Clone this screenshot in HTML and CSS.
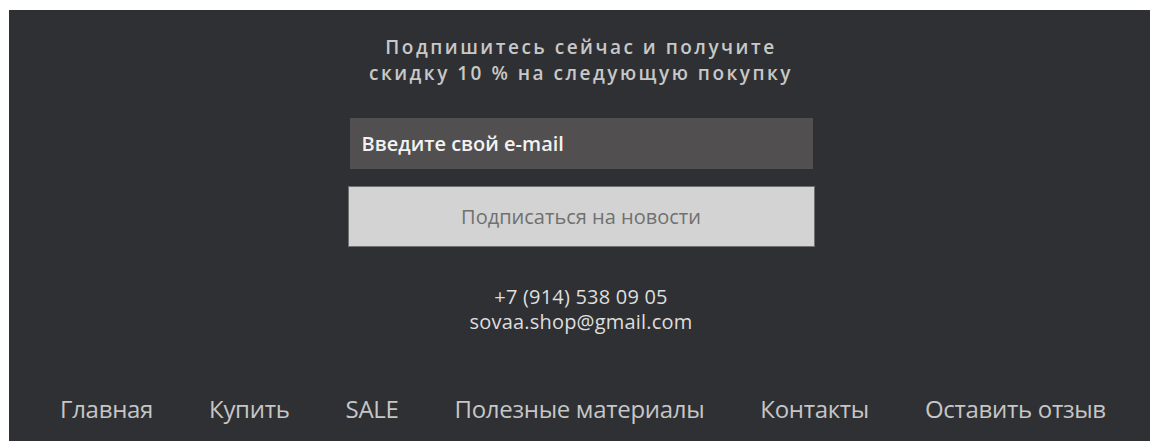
FILE: index.html
```html
<!DOCTYPE html>
<html lang="ru">
<head>
<meta charset="utf-8">
<title>Подписка</title>
<link rel="stylesheet" href="styles.css">
</head>
<body>
<footer class="footer">
  <div class="subscribe">
    <h2 class="subscribe-title">Подпишитесь сейчас и получите<br>скидку 10 % на следующую покупку</h2>
    <form class="subscribe-form">
      <input class="subscribe-input" type="email" placeholder="Введите свой e-mail">
      <button class="subscribe-button" type="button">Подписаться на новости</button>
    </form>
    <div class="contacts">
      <div>+7 (914) 538 09 05</div>
      <div>sovaa.shop@gmail.com</div>
    </div>
  </div>
  <nav class="footer-nav">
    <a href="#">Главная</a>
    <a href="#">Купить</a>
    <a href="#">SALE</a>
    <a href="#">Полезные материалы</a>
    <a href="#">Контакты</a>
    <a href="#">Оставить отзыв</a>
  </nav>
</footer>
</body>
</html>
```
FILE: styles.css
```css
html, body {
  overflow: hidden;
}
body {
  margin: 10px 0 0 9px;
  background: #fff;
  font-family: "Open Sans", "Liberation Sans", sans-serif;
}
.footer {
  width: 1144px;
  height: 431px;
  background: #2f3033;
  box-sizing: border-box;
  padding-top: 24px;
}
.subscribe {
  display: flex;
  flex-direction: column;
  align-items: center;
}
.subscribe-title {
  margin: 0;
  text-align: center;
  font-size: 19px;
  font-weight: 600;
  line-height: 26px;
  letter-spacing: 2.5px;
  color: #c8c8c8;
}
.subscribe-form {
  margin-top: 32px;
  display: flex;
  flex-direction: column;
  align-items: center;
  gap: 17px;
}
.subscribe-input {
  width: 463px;
  height: 51px;
  box-sizing: border-box;
  border: none;
  background: #524f50;
  padding: 0 12px;
  font-family: inherit;
  font-size: 20px;
  font-weight: 600;
  color: #fff;
  outline: none;
}
.subscribe-input::placeholder {
  color: #f2f2f2;
  opacity: 1;
}
.subscribe-button {
  width: 467px;
  height: 61px;
  box-sizing: border-box;
  border: 1px solid #707070;
  background: #d3d3d3;
  font-family: inherit;
  font-size: 20px;
  color: #707070;
  cursor: pointer;
}
.contacts {
  margin-top: 37px;
  text-align: center;
  font-size: 20px;
  line-height: 25px;
  color: #dedede;
  letter-spacing: 0.2px;
}
.footer-nav {
  margin-top: 59px;
  display: flex;
  padding-left: 51px;
  gap: 56px;
}
.footer-nav a {
  color: #c6c6c6;
  text-decoration: none;
  font-size: 24px;
  line-height: 32px;
  letter-spacing: -0.3px;
}
```
